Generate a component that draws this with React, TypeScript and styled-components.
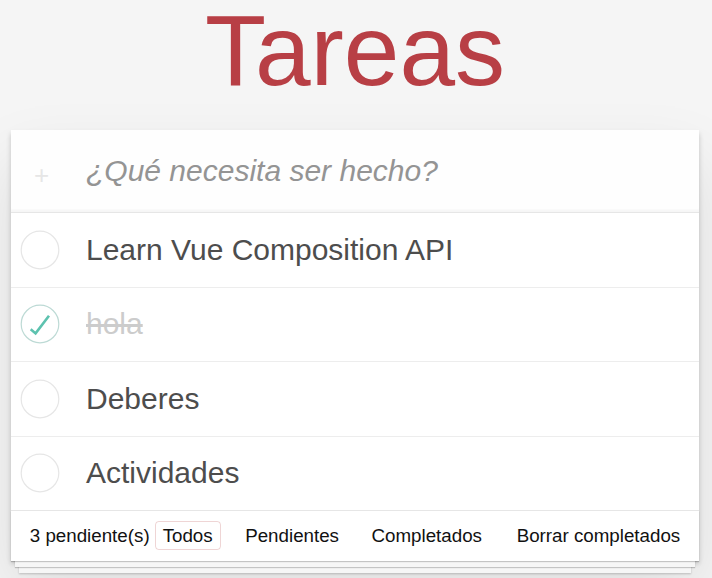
import React from "react";
import styled, { createGlobalStyle } from "styled-components";

const GlobalStyle = createGlobalStyle`
  html, body {
    margin: 0;
    padding: 0;
    background: #f5f5f5;
  }
  body {
    font-family: "Liberation Sans", Arial, sans-serif;
    color: #4d4d4d;
    -webkit-font-smoothing: antialiased;
  }
  * { box-sizing: border-box; }
`;

const Page = styled.div`
  display: flex;
  flex-direction: column;
  padding: 0 13px 40px 11px;
`;

const Title = styled.h1`
  margin: 0 0 30px;
  height: 100px;
  font-size: 100px;
  line-height: 100px;
  font-weight: 400;
  text-align: center;
  color: #b83f45;
`;

const Card = styled.section`
  position: relative;
  background: #fff;
  box-shadow: 0 2.5px 5px rgba(0, 0, 0, 0.2), 0 31px 62px rgba(0, 0, 0, 0.1);
`;

const NewRow = styled.header`
  display: flex;
  align-items: center;
  height: 82px;
  background: rgba(0, 0, 0, 0.003);
  box-shadow: inset 0 -2.5px 1px rgba(0, 0, 0, 0.03);
`;

const PlusCell = styled.span`
  width: 75px;
  padding: 7px 14px 0 0;
  text-align: center;
  font-size: 26px;
  line-height: 42px;
  color: #e6e6e6;
`;

const NewInput = styled.input`
  flex: 1;
  min-width: 0;
  border: none;
  outline: none;
  background: transparent;
  padding: 20px 18px 20px 0;
  font-family: "Liberation Sans", Arial, sans-serif;
  font-size: 30px;
  line-height: 42px;
  color: #4d4d4d;
  &::placeholder {
    font-style: italic;
    color: #949494;
  }
`;

const List = styled.ul`
  margin: 0;
  padding: 0;
  list-style: none;
  border-top: 1px solid #e6e6e6;
`;

const Item = styled.li`
  display: flex;
  align-items: center;
  border-bottom: 1px solid #ededed;
  &:last-child {
    border-bottom: none;
  }
`;

const ToggleCell = styled.span`
  display: flex;
  align-items: center;
  width: 75px;
  padding-left: 9px;
  flex-shrink: 0;
`;

const Label = styled.label<{ $done: boolean }>`
  flex: 1;
  padding: 18.75px 18px 18.75px 0;
  font-size: 30px;
  line-height: 36px;
  color: ${(p) => (p.$done ? "#cccccc" : "#4d4d4d")};
  text-decoration: ${(p) => (p.$done ? "line-through" : "none")};
`;

const Footer = styled.footer`
  position: relative;
  display: flex;
  align-items: center;
  height: 51px;
  padding: 0 18.75px 2px;
  border-top: 1px solid #e6e6e6;
  font-size: 18.75px;
  color: #111;
  &::before {
    content: "";
    position: absolute;
    left: 0;
    right: 0;
    bottom: 0;
    height: 50px;
    pointer-events: none;
    box-shadow: 0 1px 1px rgba(0, 0, 0, 0.2), 0 10px 0 -4px #f6f6f6,
      0 11px 1px -4px rgba(0, 0, 0, 0.2), 0 20px 0 -8px #f6f6f6,
      0 21px 2px -8px rgba(0, 0, 0, 0.2);
  }
`;

const Count = styled.span`
  position: relative;
  line-height: 21px;
`;

const Filters = styled.ul`
  position: relative;
  display: flex;
  gap: 16.5px;
  margin: 0 0 0 5px;
  padding: 0;
  list-style: none;
`;

const FilterLink = styled.a<{ $selected: boolean }>`
  display: block;
  padding: 3px 7px;
  line-height: 21px;
  border: 1px solid ${(p) => (p.$selected ? "rgba(175, 47, 47, 0.2)" : "transparent")};
  border-radius: 3.75px;
  color: inherit;
  text-decoration: none;
  cursor: pointer;
`;

const ClearButton = styled.button`
  position: relative;
  margin-left: auto;
  padding: 0;
  border: none;
  background: none;
  font-family: "Liberation Sans", Arial, sans-serif;
  font-size: 18.75px;
  line-height: 21px;
  color: #111;
  cursor: pointer;
`;

const Toggle = ({ done }: { done: boolean }) => (
  <svg width="40" height="40" viewBox="0 0 40 40" aria-hidden="true">
    <circle
      cx="20"
      cy="20"
      r="18.8"
      fill="none"
      stroke={done ? "#bddad5" : "#e6e6e6"}
      strokeWidth="1.2"
    />
    {done && (
      <polyline
        points="10.7,25.2 15.6,29.4 29,11.7"
        fill="none"
        stroke="#5dc2af"
        strokeWidth="2.6"
      />
    )}
  </svg>
);

const todos = [
  { id: 1, title: "Learn Vue Composition API", done: false },
  { id: 2, title: "hola", done: true },
  { id: 3, title: "Deberes", done: false },
  { id: 4, title: "Actividades", done: false },
];

const filters = ["Todos", "Pendientes", "Completados"];

export default function App() {
  return (
    <>
      <GlobalStyle />
      <Page>
        <Title>Tareas</Title>
        <Card>
          <NewRow>
            <PlusCell>+</PlusCell>
            <NewInput placeholder="¿Qué necesita ser hecho?" />
          </NewRow>
          <List>
            {todos.map((t) => (
              <Item key={t.id}>
                <ToggleCell>
                  <Toggle done={t.done} />
                </ToggleCell>
                <Label $done={t.done}>{t.title}</Label>
              </Item>
            ))}
          </List>
          <Footer>
            <Count>3 pendiente(s)</Count>
            <Filters>
              {filters.map((f, i) => (
                <li key={f}>
                  <FilterLink $selected={i === 0}>{f}</FilterLink>
                </li>
              ))}
            </Filters>
            <ClearButton>Borrar completados</ClearButton>
          </Footer>
        </Card>
      </Page>
    </>
  );
}
